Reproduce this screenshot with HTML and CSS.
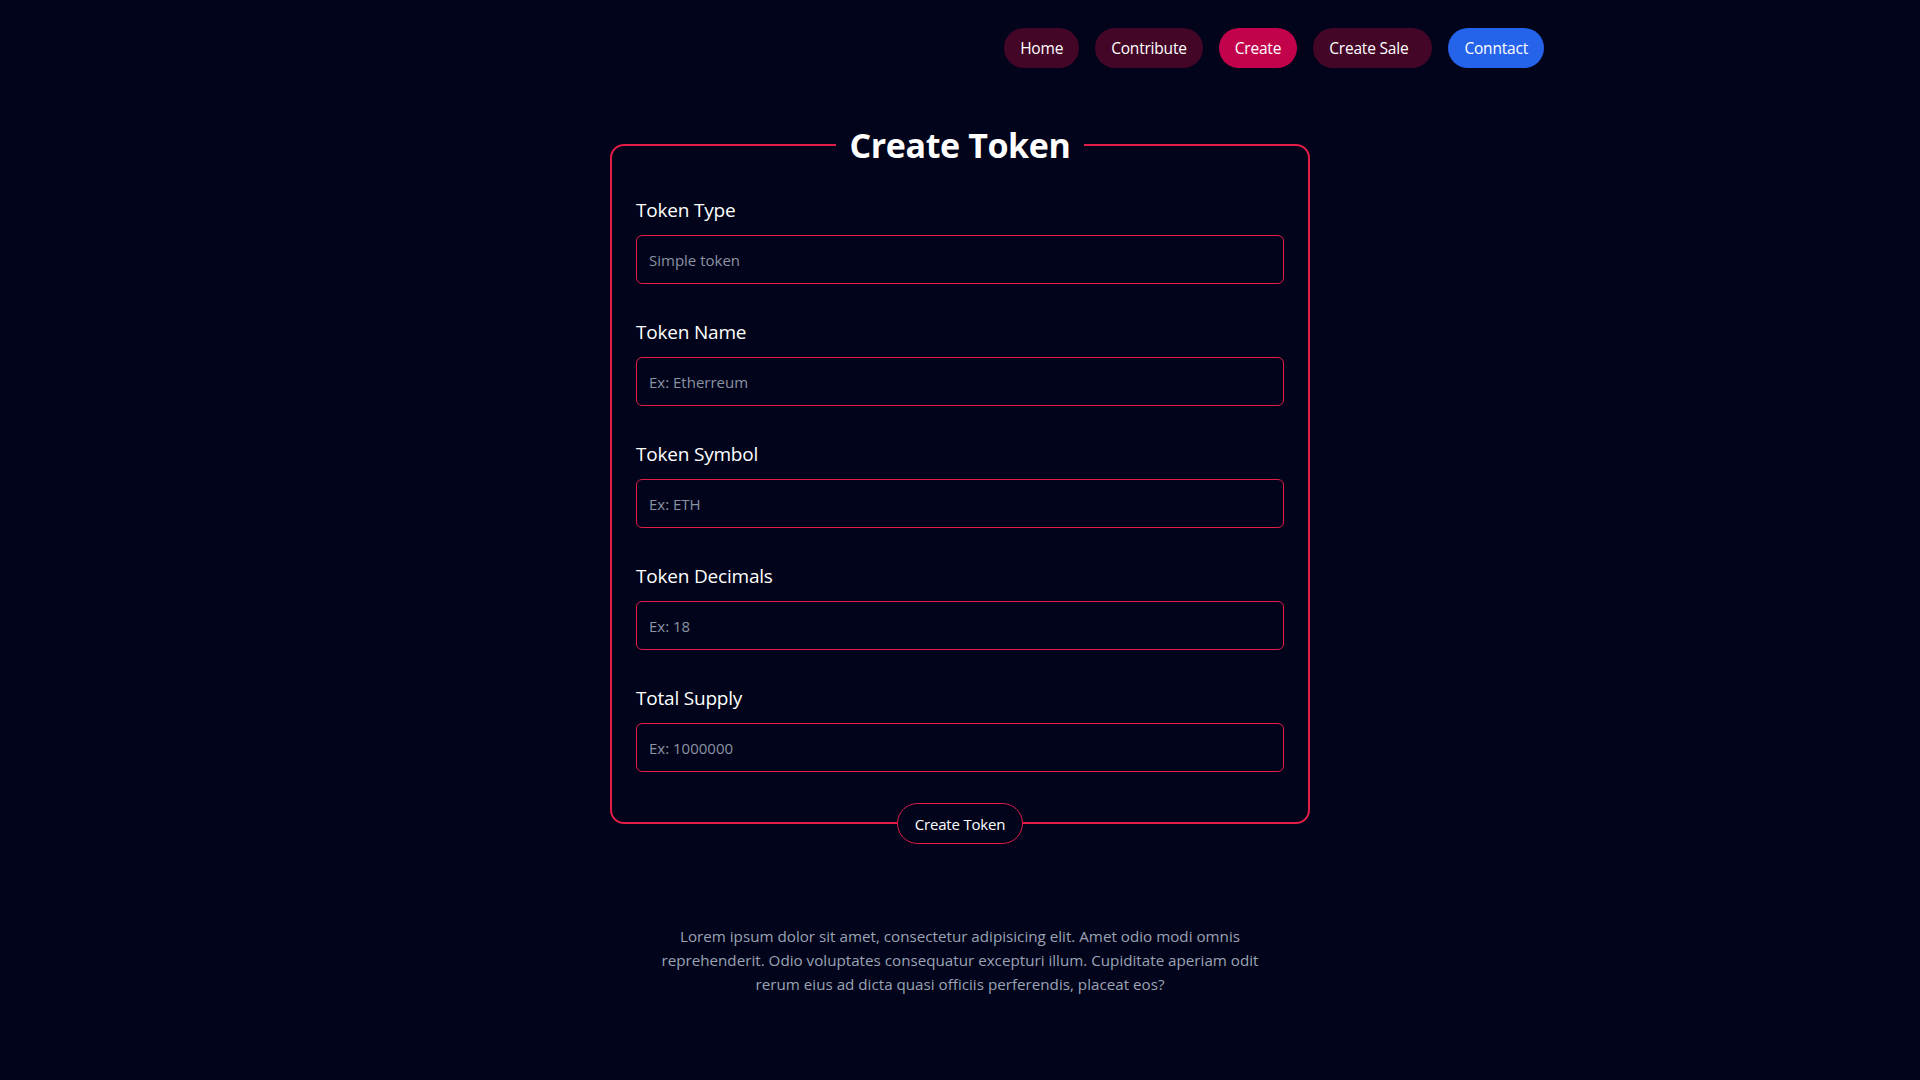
FILE: index.html
```html
<!DOCTYPE html>
<html lang="en">
<head>
<meta charset="utf-8">
<title>Create Token</title>
<link rel="stylesheet" href="styles.css">
</head>
<body>
<header class="topbar">
  <nav class="nav">
    <a class="nav-btn" href="#">Home</a>
    <a class="nav-btn" href="#">Contribute</a>
    <a class="nav-btn nav-btn--active" href="#">Create</a>
    <a class="nav-btn nav-btn--wide" href="#">Create Sale</a>
    <a class="nav-btn nav-btn--blue" href="#">Conntact</a>
  </nav>
</header>
<main class="main">
  <form class="token-form">
    <fieldset class="card">
      <legend class="card-title">Create Token</legend>
      <div class="field">
        <label class="field-label">Token Type</label>
        <input class="field-input" type="text" placeholder="Simple token">
      </div>
      <div class="field">
        <label class="field-label">Token Name</label>
        <input class="field-input" type="text" placeholder="Ex: Etherreum">
      </div>
      <div class="field">
        <label class="field-label">Token Symbol</label>
        <input class="field-input" type="text" placeholder="Ex: ETH">
      </div>
      <div class="field">
        <label class="field-label">Token Decimals</label>
        <input class="field-input" type="text" placeholder="Ex: 18">
      </div>
      <div class="field field--last">
        <label class="field-label">Total Supply</label>
        <input class="field-input" type="text" placeholder="Ex: 1000000">
      </div>
    </fieldset>
    <div class="submit-row">
      <button class="submit-btn" type="button">Create Token</button>
    </div>
  </form>
  <p class="note">Lorem ipsum dolor sit amet, consectetur adipisicing elit. Amet odio modi omnis reprehenderit. Odio voluptates consequatur excepturi illum. Cupiditate aperiam odit rerum eius ad dicta quasi officiis perferendis, placeat eos?</p>
</main>
</body>
</html>
```

FILE: styles.css
```css
* {
  box-sizing: border-box;
}

html, body {
  margin: 0;
  padding: 0;
}

body {
  background: #01041a;
  color: #ffffff;
  font-family: "Open Sans", "Noto Sans", "Liberation Sans", sans-serif;
  min-height: 1080px;
}

.topbar {
  max-width: 1200px;
  margin: 0 auto;
  padding: 28px 16px 0;
}

.nav {
  display: flex;
  justify-content: flex-end;
  gap: 16px;
}

.nav-btn {
  display: inline-flex;
  align-items: center;
  height: 40px;
  padding: 0 16px;
  border-radius: 20px;
  background: #440627;
  color: #ffffff;
  text-decoration: none;
  font-size: 15.5px;
  letter-spacing: -0.2px;
}

.nav-btn--wide {
  padding-right: 24px;
}

.nav-btn--active {
  background: #c2034c;
}

.nav-btn--blue {
  background: #2563eb;
}

.main {
  display: flex;
  flex-direction: column;
  align-items: center;
  padding-top: 54px;
}

.token-form {
  width: 700px;
}

.card {
  margin: 0;
  width: 700px;
  border: 2px solid #e11d48;
  border-radius: 14px;
  padding: 29px 24px 50px;
}

.card-title {
  margin: 0 auto;
  padding: 0 14px;
  font-size: 34px;
  font-weight: 700;
  line-height: 46px;
  letter-spacing: -0.4px;
}

.field {
  display: flex;
  flex-direction: column;
  gap: 12px;
  margin-bottom: 35px;
}

.field--last {
  margin-bottom: 0;
}

.field-label {
  font-size: 19px;
  line-height: 26px;
  color: #ffffff;
  letter-spacing: -0.2px;
}

.field-input {
  height: 49px;
  width: 100%;
  border: 1px solid #e11d48;
  border-radius: 6px;
  background: transparent;
  color: #ffffff;
  padding: 0 12px;
  font-family: inherit;
  font-size: 15px;
  outline: none;
}

.field-input::placeholder {
  color: #8b93a3;
}

.submit-row {
  display: flex;
  justify-content: center;
  margin-top: -21px;
  position: relative;
}

.submit-btn {
  height: 41px;
  padding: 0 17px;
  border: 1px solid #e11d48;
  border-radius: 21px;
  background: #01041a;
  color: #ffffff;
  font-family: inherit;
  font-size: 15px;
  letter-spacing: -0.2px;
}

.note {
  max-width: 600px;
  margin: 80px 0 0;
  text-align: center;
  color: #9ba3b4;
  font-size: 15.2px;
  line-height: 24px;
}
```
